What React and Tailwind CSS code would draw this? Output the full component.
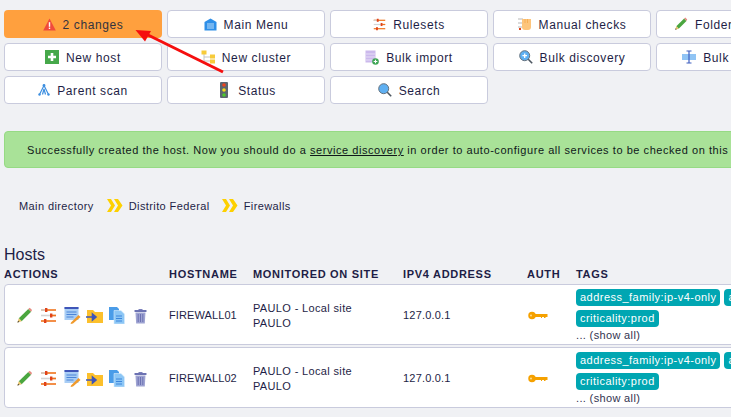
const PencilIcon = ({ size = 18 }) => (
  <svg width={size} height={size} viewBox="0 0 18 18" className="shrink-0">
    <path d="M3 12 L13 2 L16 5 L6 15 Z" fill="#4aa63f" />
    <path d="M13 2 L14.5 0.8 L17 3.3 L16 5 Z" fill="#e58a80" />
    <path d="M3 12 L6 15 L1.5 16.5 Z" fill="#e8c36a" />
    <path d="M1.5 16.5 L2.2 14.5 L3.5 15.8 Z" fill="#333" />
  </svg>
);

const RulesIcon = ({ size = 17 }) => (
  <svg width={size} height={size} viewBox="0 0 17 17" className="shrink-0">
    <path d="M1 3h15" stroke="#f0741c" strokeWidth="1.6" />
    <path d="M1 3h4" stroke="#d4d4d4" strokeWidth="1.6" />
    <rect x="5" y="1" width="2.4" height="4" fill="#e0431a" />
    <path d="M1 8.5h15" stroke="#d4d4d4" strokeWidth="1.6" />
    <path d="M12 8.5h4" stroke="#f0741c" strokeWidth="1.6" />
    <rect x="10" y="6.5" width="2.4" height="4" fill="#e0431a" />
    <path d="M1 14h15" stroke="#f0741c" strokeWidth="1.6" />
    <rect x="4" y="12" width="2.4" height="4" fill="#e0431a" />
  </svg>
);

const Icon = ({ name }) => {
  if (name === 'warn')
    return (
      <svg width="13" height="13" viewBox="0 0 13 13" className="shrink-0">
        <path d="M6.5 0.5 L12.8 12.5 H0.2 Z" fill="#f04a3c" />
        <rect x="5.8" y="4.2" width="1.4" height="4.6" fill="#fff" />
        <rect x="5.8" y="9.6" width="1.4" height="1.4" fill="#fff" />
      </svg>
    );
  if (name === 'menu')
    return (
      <svg width="13" height="13" viewBox="0 0 13 13" className="shrink-0">
        <path d="M6.5 0.5 L12.5 4 V12.5 H0.5 V4 Z" fill="#2f8fe8" />
        <path d="M3 6h7M3 8h7M3 10h7" stroke="#bcdcf8" strokeWidth="1" />
      </svg>
    );
  if (name === 'rules') return <RulesIcon size={13} />;
  if (name === 'manual')
    return (
      <svg width="14" height="14" viewBox="0 0 14 14" className="shrink-0">
        <path d="M0 2h5M0 6h5M0 10h5" stroke="#d0d0d0" strokeWidth="1.3" />
        <rect x="1" y="11" width="2" height="2" fill="#e0431a" />
        <path d="M4 2 H13 V10 Q13 13 10 13 H7 Q4 13 4 10 Z" fill="#fdc57c" />
        <path d="M7 2v4M9.5 2v4" stroke="#f4a94e" strokeWidth="0.8" />
      </svg>
    );
  if (name === 'pencil') return <PencilIcon size={14} />;
  if (name === 'add')
    return (
      <svg width="14" height="14" viewBox="0 0 14 14" className="shrink-0">
        <rect width="14" height="14" fill="#46a84a" />
        <path d="M7 3v8M3 7h8" stroke="#fff" strokeWidth="2.6" />
      </svg>
    );
  if (name === 'cluster')
    return (
      <svg width="14" height="14" viewBox="0 0 14 14" className="shrink-0">
        <path d="M3 4v7h6M3 7h6" stroke="#c4c4c4" strokeWidth="1" fill="none" />
        <rect x="0.5" y="0.5" width="5" height="4" fill="#f7cb3a" />
        <rect x="9" y="4.5" width="5" height="4" fill="#f7cb3a" />
        <rect x="9" y="9.5" width="5" height="4" fill="#f7cb3a" />
      </svg>
    );
  if (name === 'import')
    return (
      <svg width="14" height="15" viewBox="0 0 14 15" className="shrink-0">
        <rect x="0.5" y="0.5" width="10" height="12" fill="#cbb9ec" />
        <path d="M1 4h9M1 7h9M1 10h9" stroke="#e6def6" strokeWidth="1" />
        <circle cx="10.5" cy="11.5" r="3.3" fill="#3ea655" />
        <path d="M10.5 9.7v3.6M8.7 11.5h3.6" stroke="#fff" strokeWidth="1.1" />
      </svg>
    );
  if (name === 'discovery' || name === 'search')
    return (
      <svg width="14" height="14" viewBox="0 0 14 14" className="shrink-0">
        <path d="M9 9l4.2 4.2" stroke="#4d5660" strokeWidth="1.6" />
        <circle cx="5.7" cy="5.7" r="5" fill="#5fb0f2" stroke="#66727e" strokeWidth="1" />
        {name === 'discovery' && <path d="M5.7 3.4v4.6M3.4 5.7h4.6" stroke="#fff" strokeWidth="1.3" />}
      </svg>
    );
  if (name === 'bulkedit')
    return (
      <svg width="14" height="14" viewBox="0 0 14 14" className="shrink-0">
        <rect x="0" y="4" width="14" height="6" fill="#90c4f4" />
        <path d="M4.5 1h5M4.5 13h5M7 1v12" stroke="#3f5fc0" strokeWidth="1.2" />
      </svg>
    );
  if (name === 'parent')
    return (
      <svg width="12" height="12" viewBox="0 0 12 12" className="shrink-0">
        <path d="M6 1.5 L1.5 10.5M6 1.5 L10.5 10.5M6 5 L4.5 10.5M6 5 L7.5 10.5" stroke="#3d8fe0" strokeWidth="1.2" fill="none" />
        <circle cx="6" cy="1.5" r="1.4" fill="#3d8fe0" />
        <circle cx="1.5" cy="10.5" r="1.2" fill="#3d8fe0" />
        <circle cx="10.5" cy="10.5" r="1.2" fill="#3d8fe0" />
      </svg>
    );
  if (name === 'status')
    return (
      <svg width="8" height="16" viewBox="0 0 8 16" className="shrink-0 ml-[4px] mr-[3px]">
        <rect width="8" height="16" rx="1" fill="#5c6670" />
        <circle cx="4" cy="3" r="1.8" fill="#f0431c" />
        <circle cx="4" cy="8" r="1.8" fill="#f4dc1c" />
        <circle cx="4" cy="13" r="1.8" fill="#4cc82c" />
      </svg>
    );
  return null;
};

const buttons = [
  { label: '2 changes', icon: 'warn', hot: true },
  { label: 'Main Menu', icon: 'menu' },
  { label: 'Rulesets', icon: 'rules' },
  { label: 'Manual checks', icon: 'manual' },
  { label: 'Folder properties', icon: 'pencil' },
  { label: 'New host', icon: 'add' },
  { label: 'New cluster', icon: 'cluster' },
  { label: 'Bulk import', icon: 'import' },
  { label: 'Bulk discovery', icon: 'discovery' },
  { label: 'Bulk renaming', icon: 'bulkedit' },
  { label: 'Parent scan', icon: 'parent' },
  { label: 'Status', icon: 'status' },
  { label: 'Search', icon: 'search' },
];

const hosts = ['FIREWALL01', 'FIREWALL02'];

const Chevrons = () => (
  <svg width="16" height="13" viewBox="0 0 16 13" className="shrink-0">
    <path d="M0 0h4l4 6.5-4 6.5H0l4-6.5z" fill="#fdd000" />
    <path d="M7 0h4l4.5 6.5L11 13H7l4-6.5z" fill="#fdd000" />
  </svg>
);

const RowIcons = () => (
  <div className="flex items-center pl-[11px] pt-[2px] gap-[5px]">
    <PencilIcon size={17} />
    <span className="ml-[2px]"><RulesIcon size={17} /></span>
    <svg width="18" height="17" viewBox="0 0 18 17" className="shrink-0 ml-[2px]">
      <rect x="0.5" y="0" width="14" height="13" fill="#a8cdf5" />
      <rect x="0.5" y="0" width="14" height="2" fill="#3f55b8" />
      <path d="M2.5 5h10M2.5 7.5h10M2.5 10h7" stroke="#4a84d8" strokeWidth="1" />
      <path d="M7 15.5 L14.5 8 L16.5 10 L9 16.5 L6.6 16.9 Z" fill="#f09a2c" />
    </svg>
    <svg width="18" height="14" viewBox="0 0 18 14" className="shrink-0 -ml-[1px]">
      <path d="M1 1h6l2 2h8v11H1z" fill="#fcc02c" />
      <path d="M0 8h9M6.5 5l3.5 3-3.5 3z" stroke="#3f55b8" strokeWidth="1.6" fill="#3f55b8" />
    </svg>
    <svg width="16" height="17" viewBox="0 0 16 17" className="shrink-0">
      <path d="M0 0h8l2 2v11H0z" fill="#4a9ce8" />
      <path d="M5 3.5h7l3.5 3.5V17H5z" fill="#8cc6f5" stroke="#d8ecfb" strokeWidth="0.6" />
      <path d="M7 9h6M7 11.5h6M7 14h6" stroke="#3c86dc" strokeWidth="1" />
    </svg>
    <svg width="13" height="16" viewBox="0 0 13 16" className="shrink-0 ml-[4px]">
      <path d="M4.5 1h4v1H4.5z" fill="#7b80bc" />
      <rect x="0.5" y="2" width="12" height="2" rx="0.5" fill="#6c72b2" />
      <path d="M1.5 4.5h10L10.8 15.5H2.2z" fill="#9ea3d2" />
      <path d="M4.2 6v8M6.5 6v8M8.8 6v8" stroke="#6c72b2" strokeWidth="1" />
    </svg>
  </div>
);

const KeyIcon = () => (
  <svg width="20" height="9" viewBox="0 0 20 9" className="mt-[2px] ml-[1px]">
    <circle cx="4" cy="4.5" r="3" fill="#f5a100" stroke="#f5a100" strokeWidth="1.5" />
    <circle cx="3" cy="4.5" r="0.9" fill="#ffe2a0" />
    <path d="M7 3h12.5v3H17.5v1h-1.5V6H14v1h-1V6H7z" fill="#f5a100" />
  </svg>
);

const Tag = ({ children }) => (
  <span className="inline-block shrink-0 rounded-[4px] bg-[#00a6b2] text-white px-[4px] h-[17px] leading-[17px] tracking-[0.47px]">
    {children}
  </span>
);

export default function App() {
  return (
    <div
      className="relative w-[731px] h-[417px] overflow-hidden bg-[#f0f1f4] text-[12px] tracking-[0.6px] text-[#1e1e46]"
      style={{ fontFamily: '"Liberation Sans", Arial, sans-serif' }}
    >
      <div className="grid grid-cols-[repeat(5,158px)] gap-[5px] pl-[4px] pt-[10px]">
        {buttons.map((b) => (
          <div
            key={b.label}
            className={
              b.hot
                ? 'h-[28px] flex items-center justify-center gap-[7px] rounded-[4px] bg-[#ffa03e] text-[#33333f]'
                : 'h-[28px] flex items-center justify-center gap-[7px] rounded-[4px] bg-white border border-[#c9cbdd]'
            }
          >
            <Icon name={b.icon} />
            <span className="whitespace-nowrap pt-[1px]">{b.label}</span>
          </div>
        ))}
      </div>

      <div className="mt-[27px] ml-[4px] w-[760px] h-[37px] flex items-center pl-[22px] pt-[2px] rounded-[4px] bg-[#a9e298] border border-[#96da84] text-[11px] tracking-[0.55px] text-[#10181a] whitespace-nowrap">
        Successfully created the host. Now you should do a&nbsp;<span className="underline">service discovery</span>&nbsp;in order to auto-configure all services to be checked on this host.
      </div>

      <div className="mt-[31px] ml-[19px] h-[14px] flex items-center text-[11px] tracking-[0.4px]">
        <span>Main directory</span>
        <span className="ml-[13px] mr-[6px] -mt-[2px]"><Chevrons /></span>
        <span>Distrito Federal</span>
        <span className="ml-[12px] mr-[6px] -mt-[2px]"><Chevrons /></span>
        <span>Firewalls</span>
      </div>

      <div className="mt-[32px] ml-[4px] text-[16px] leading-[20px] tracking-normal">Hosts</div>

      <div className="ml-[4px] mt-[1px] w-[800px]">
        <div className="grid grid-cols-[165px_84px_150px_124px_49px_1fr] h-[16px] items-center text-[11px] font-bold tracking-[0.7px]">
          <span>ACTIONS</span>
          <span>HOSTNAME</span>
          <span>MONITORED ON SITE</span>
          <span>IPV4 ADDRESS</span>
          <span>AUTH</span>
          <span>TAGS</span>
        </div>
        <div className="mt-[2px] flex flex-col gap-[2px]">
          {hosts.map((h) => (
            <div
              key={h}
              className="grid grid-cols-[164px_84px_150px_124px_49px_1fr] items-center h-[61px] bg-white border border-[#c9cbdd] rounded-[4px] text-[11px] tracking-[0.35px]"
            >
              <RowIcons />
              <span className="pt-[2px] tracking-[0.1px]">{h}</span>
              <span className="pt-[2px] leading-[15px]">
                PAULO - Local site
                <br />
                PAULO
              </span>
              <span className="pt-[2px] tracking-[0.2px]">127.0.0.1</span>
              <KeyIcon />
              <div className="flex flex-col gap-[4px]">
                <div className="flex gap-[4px]">
                  <Tag>address_family:ip-v4-only</Tag>
                  <Tag>agent:cmk-agent</Tag>
                </div>
                <div>
                  <Tag>criticality:prod</Tag>
                </div>
                <div className="-mt-[2px] leading-[12px] text-[#33334f]">... (show all)</div>
              </div>
            </div>
          ))}
        </div>
      </div>

      <svg width="100" height="52" viewBox="0 0 100 52" className="absolute left-[132px] top-[26px]">
        <path d="M91 46 L14 8" stroke="#f50f0f" strokeWidth="3" />
        <path d="M3.5 4 L19 5 L13 15.5 Z" fill="#f50f0f" />
      </svg>
    </div>
  );
}
